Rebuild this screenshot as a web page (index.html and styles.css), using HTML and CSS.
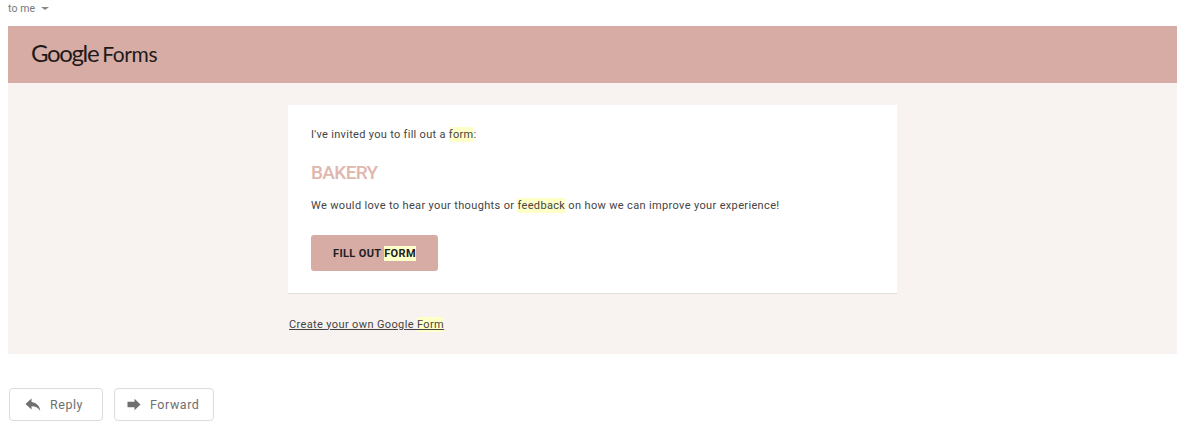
FILE: index.html
```html
<!DOCTYPE html>
<html lang="en">
<head>
<meta charset="utf-8">
<title>Google Forms invitation</title>
<link rel="stylesheet" href="styles.css">
</head>
<body>
<div class="to-line"><span>to me</span><span class="caret"></span></div>
<div class="mail">
  <header class="banner"><span class="logo"><span class="logo-g">Google</span><span class="logo-f">Forms</span></span></header>
  <main class="content">
    <section class="card">
      <p class="intro">I've invited you to fill out a <mark>form</mark>:</p>
      <h1 class="title">BAKERY</h1>
      <p class="desc">We would love to hear your thoughts or <mark>feedback</mark> on how we can improve your experience!</p>
      <a class="fill" href="#">FILL OUT <mark>FORM</mark></a>
    </section>
    <a class="create" href="#">Create your own Google <mark>Form</mark></a>
  </main>
</div>
<div class="actions">
  <button class="action reply">
    <svg width="16" height="14" viewBox="0 0 16 14"><path d="M6.500 0.500 0.500 6l6 5.500V8.200c3.800 0 6.500 1.200 8.800 4.800-0.600-5-3.300-8.200-8.800-9z" fill="#6f6f6f"/></svg>
    <span>Reply</span>
  </button>
  <button class="action forward">
    <svg width="14" height="14" viewBox="0 0 14 14"><path d="M7.500 0.800 13.500 6.500l-6 5.700V9.300H0.500V3.700h7z" fill="#6f6f6f"/></svg>
    <span>Forward</span>
  </button>
</div>
</body>
</html>
```
FILE: styles.css
```css
html, body { margin: 0; padding: 0; background: #fff; }
body { width: 1185px; height: 434px; overflow: hidden; font-family: Roboto, "Liberation Sans", sans-serif; }
.to-line { height: 26px; padding: 2px 0 0 8px; box-sizing: border-box; display: flex; align-items: flex-start; gap: 6px; font-size: 10.500px; line-height: 13px; letter-spacing: 0.100px; color: #777; }
.caret { width: 0; height: 0; margin-top: 5px; border-left: 4px solid transparent; border-right: 4px solid transparent; border-top: 3px solid #888; }
.mail { margin: 0 8px; width: 1169px; }
.banner { height: 57px; background: #d7aca5; padding-left: 23px; display: flex; align-items: center; }
.logo { font-family: Lato, "Open Sans", sans-serif; color: #1f1a1a; line-height: 26px; white-space: nowrap; margin-top: -3px; display: flex; gap: 4px; align-items: baseline; }
.logo-g { font-size: 24px; letter-spacing: -1.350px; }
.logo-f { font-size: 21px; letter-spacing: -0.400px; }
.content { height: 271px; background: #f8f3f1; padding: 22px 0 0 280px; box-sizing: border-box; }
.card { width: 609px; height: 188.500px; box-sizing: border-box; background: #fff; border-bottom: 1px solid #e0e0e0; padding: 21px 23px 0; }
.intro, .desc { margin: 0; font-size: 11px; line-height: 16px; color: #444; letter-spacing: 0.300px; }
.desc { letter-spacing: 0.350px; }
.intro { margin-top: 1px; }
mark { background: #ffffc8; color: inherit; padding: 1px 0; }
.title { margin: 18px 0 0; font-size: 19px; line-height: 24px; font-weight: 500; letter-spacing: -0.650px; color: #e0b7ae; }
.desc { margin-top: 13px; }
.fill { display: flex; align-items: center; justify-content: center; width: 127px; height: 36px; margin-top: 21px; background: #d7aca5; border-radius: 3px; font-size: 11px; font-weight: 700; color: #202124; text-decoration: none; letter-spacing: 0.350px; white-space: pre; }
.create { display: inline-block; margin: 23px 0 0 1px; font-size: 11px; line-height: 16px; color: #444; letter-spacing: 0.370px; text-decoration: underline; }
.actions { display: flex; gap: 11.500px; padding: 34px 0 0 9px; }
.action { height: 33px; box-sizing: border-box; display: flex; align-items: center; background: #fff; border: 1px solid #dadce0; border-radius: 4px; font-family: Roboto, sans-serif; font-size: 12.500px; letter-spacing: 0.550px; color: #6f6f6f; padding: 0; }
.reply { width: 93.500px; padding-left: 15px; gap: 9px; }
.forward { width: 100px; padding-left: 12px; gap: 9px; }
```
